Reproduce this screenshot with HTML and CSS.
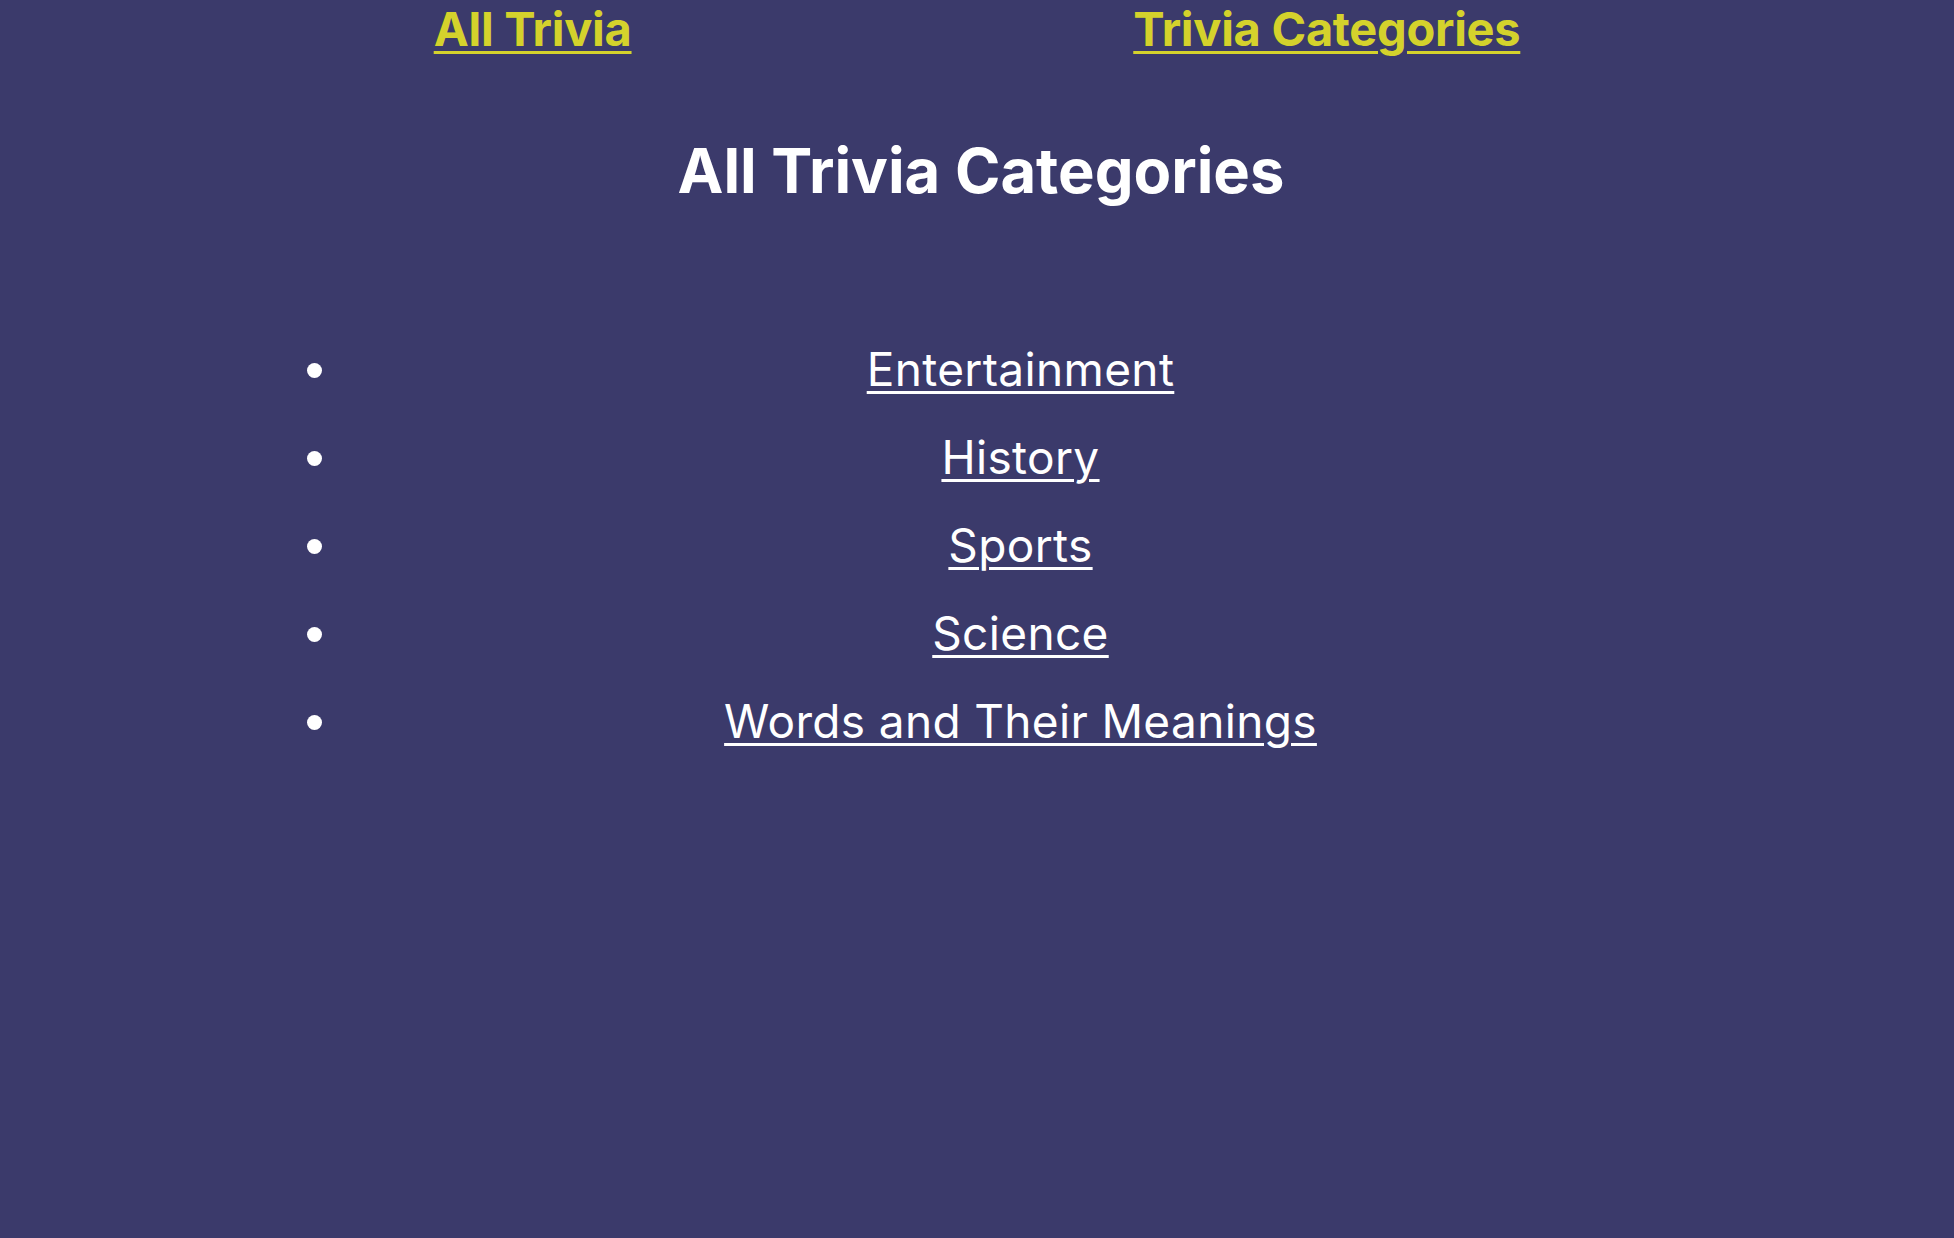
FILE: index.html
```html
<!DOCTYPE html>
<html lang="en">
<head>
<meta charset="utf-8">
<title>All Trivia Categories</title>
<link rel="stylesheet" href="styles.css">
</head>
<body>
<nav class="topnav">
  <ul class="topnav-list">
    <li class="topnav-item"><a class="topnav-link" href="#">All Trivia</a></li>
    <li class="topnav-item"><a class="topnav-link" href="#">Trivia Categories</a></li>
  </ul>
</nav>
<main class="content">
  <h1 class="page-title">All Trivia Categories</h1>
  <ul class="category-list">
    <li class="category-item"><a class="category-link" href="#">Entertainment</a></li>
    <li class="category-item"><a class="category-link" href="#">History</a></li>
    <li class="category-item"><a class="category-link" href="#">Sports</a></li>
    <li class="category-item"><a class="category-link" href="#">Science</a></li>
    <li class="category-item"><a class="category-link" href="#">Words and Their Meanings</a></li>
  </ul>
</main>
</body>
</html>
```
FILE: styles.css
```css
html, body {
  margin: 0;
  padding: 0;
}

body {
  background: #3b3a6b;
  font-family: Inter, "Noto Sans", sans-serif;
  color: #ffffff;
  min-height: 1238px;
}

.topnav-list {
  display: flex;
  justify-content: space-evenly;
  list-style: none;
  margin: 0;
  padding: 0 8px;
}

.topnav-link {
  display: block;
  padding: 0 76px;
  color: #d4d22c;
  font-size: 47px;
  font-weight: 700;
  letter-spacing: -0.3px;
  line-height: normal;
  text-decoration: underline;
  text-decoration-thickness: 3px;
  text-underline-offset: 5px;
}

.content {
  padding: 77px 0 0;
}

.page-title {
  margin: 0;
  padding-left: 8px;
  font-size: 61.5px;
  font-weight: 700;
  line-height: 1.2;
  text-align: center;
}

.category-list {
  margin: 117px 0 0;
  padding: 0 257px 0 344px;
}

.category-item {
  font-size: 46px;
  letter-spacing: 0.35px;
  line-height: 88px;
  text-align: center;
}

.category-link {
  color: #ffffff;
  text-decoration: underline;
  text-decoration-thickness: 3px;
  text-underline-offset: 5px;
}
```
